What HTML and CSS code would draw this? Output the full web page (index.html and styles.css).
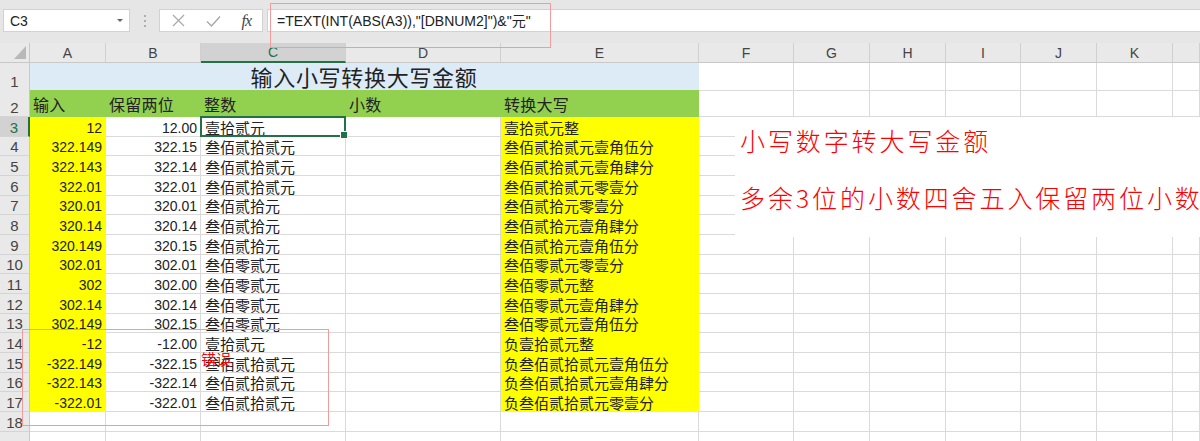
FILE: index.html
```html
<!DOCTYPE html>
<html lang="zh-CN">
<head>
    <meta charset="UTF-8">
    <title>小写转大写金额</title>
    <link rel="stylesheet" href="styles.css">
</head>
<body>
    <div class="toolbar">
        <div class="namebox"><span>C3</span><span class="caret"></span></div>
        <div class="grip">
            <svg width="4" height="14" viewBox="0 0 4 14"><circle cx="2" cy="2" r="1" fill="#9a9a9a"/><circle cx="2" cy="7" r="1" fill="#9a9a9a"/><circle cx="2" cy="12" r="1" fill="#9a9a9a"/></svg>
        </div>
        <div class="fxbtns">
            <svg width="13" height="13" viewBox="0 0 13 13"><path d="M1 1 L12 12 M12 1 L1 12" stroke="#a8a8a8" stroke-width="1.2" fill="none"/></svg>
            <svg width="15" height="12" viewBox="0 0 15 12"><path d="M1 6.5 L5.5 11 L14 1.5" stroke="#a8a8a8" stroke-width="1.4" fill="none"/></svg>
            <span class="fx">fx</span>
        </div>
        <div class="formula">=TEXT(INT(ABS(A3)),"[DBNUM2]")&amp;"<span class="cjk">元</span>"</div>
    </div>

    <div class="sheet">
        <div class="row colhead">
            <div class="corner"><span class="tri"></span></div>
            <div class="ch">A</div><div class="ch">B</div><div class="ch active">C</div><div class="ch">D</div><div class="ch">E</div>
            <div class="ch">F</div><div class="ch">G</div><div class="ch">H</div><div class="ch">I</div><div class="ch">J</div><div class="ch">K</div><div class="ch"></div>
        </div>

        <div class="row tall">
            <div class="rh">1</div>
            <div class="c title">输入小写转换大写金额</div>
            <div class="c"></div><div class="c"></div><div class="c"></div><div class="c"></div><div class="c"></div><div class="c"></div><div class="c"></div>
        </div>

        <div class="row tall">
            <div class="rh">2</div>
            <div class="c head">输入</div><div class="c head">保留两位</div><div class="c head">整数</div><div class="c head">小数</div><div class="c head">转换大写</div>
            <div class="c"></div><div class="c"></div><div class="c"></div><div class="c"></div><div class="c"></div><div class="c"></div><div class="c"></div>
        </div>

        <div class="row">
            <div class="rh active">3</div>
            <div class="c num fill">12</div><div class="c num">12.00</div><div class="c selected">壹拾贰元<span class="sel"></span></div><div class="c"></div><div class="c fill">壹拾贰元整</div>
            <div class="c"></div><div class="c"></div><div class="c"></div><div class="c"></div><div class="c"></div><div class="c"></div><div class="c"></div>
        </div>
        <div class="row">
            <div class="rh">4</div>
            <div class="c num fill">322.149</div><div class="c num">322.15</div><div class="c">叁佰贰拾贰元</div><div class="c"></div><div class="c fill">叁佰贰拾贰元壹角伍分</div>
            <div class="c"></div><div class="c"></div><div class="c"></div><div class="c"></div><div class="c"></div><div class="c"></div><div class="c"></div>
        </div>
        <div class="row">
            <div class="rh">5</div>
            <div class="c num fill">322.143</div><div class="c num">322.14</div><div class="c">叁佰贰拾贰元</div><div class="c"></div><div class="c fill">叁佰贰拾贰元壹角肆分</div>
            <div class="c"></div><div class="c"></div><div class="c"></div><div class="c"></div><div class="c"></div><div class="c"></div><div class="c"></div>
        </div>
        <div class="row">
            <div class="rh">6</div>
            <div class="c num fill">322.01</div><div class="c num">322.01</div><div class="c">叁佰贰拾贰元</div><div class="c"></div><div class="c fill">叁佰贰拾贰元零壹分</div>
            <div class="c"></div><div class="c"></div><div class="c"></div><div class="c"></div><div class="c"></div><div class="c"></div><div class="c"></div>
        </div>
        <div class="row">
            <div class="rh">7</div>
            <div class="c num fill">320.01</div><div class="c num">320.01</div><div class="c">叁佰贰拾元</div><div class="c"></div><div class="c fill">叁佰贰拾元零壹分</div>
            <div class="c"></div><div class="c"></div><div class="c"></div><div class="c"></div><div class="c"></div><div class="c"></div><div class="c"></div>
        </div>
        <div class="row">
            <div class="rh">8</div>
            <div class="c num fill">320.14</div><div class="c num">320.14</div><div class="c">叁佰贰拾元</div><div class="c"></div><div class="c fill">叁佰贰拾元壹角肆分</div>
            <div class="c"></div><div class="c"></div><div class="c"></div><div class="c"></div><div class="c"></div><div class="c"></div><div class="c"></div>
        </div>
        <div class="row">
            <div class="rh">9</div>
            <div class="c num fill">320.149</div><div class="c num">320.15</div><div class="c">叁佰贰拾元</div><div class="c"></div><div class="c fill">叁佰贰拾元壹角伍分</div>
            <div class="c"></div><div class="c"></div><div class="c"></div><div class="c"></div><div class="c"></div><div class="c"></div><div class="c"></div>
        </div>
        <div class="row">
            <div class="rh">10</div>
            <div class="c num fill">302.01</div><div class="c num">302.01</div><div class="c">叁佰零贰元</div><div class="c"></div><div class="c fill">叁佰零贰元零壹分</div>
            <div class="c"></div><div class="c"></div><div class="c"></div><div class="c"></div><div class="c"></div><div class="c"></div><div class="c"></div>
        </div>
        <div class="row">
            <div class="rh">11</div>
            <div class="c num fill">302</div><div class="c num">302.00</div><div class="c">叁佰零贰元</div><div class="c"></div><div class="c fill">叁佰零贰元整</div>
            <div class="c"></div><div class="c"></div><div class="c"></div><div class="c"></div><div class="c"></div><div class="c"></div><div class="c"></div>
        </div>
        <div class="row">
            <div class="rh">12</div>
            <div class="c num fill">302.14</div><div class="c num">302.14</div><div class="c">叁佰零贰元</div><div class="c"></div><div class="c fill">叁佰零贰元壹角肆分</div>
            <div class="c"></div><div class="c"></div><div class="c"></div><div class="c"></div><div class="c"></div><div class="c"></div><div class="c"></div>
        </div>
        <div class="row">
            <div class="rh">13</div>
            <div class="c num fill">302.149</div><div class="c num">302.15</div><div class="c">叁佰零贰元</div><div class="c"></div><div class="c fill">叁佰零贰元壹角伍分</div>
            <div class="c"></div><div class="c"></div><div class="c"></div><div class="c"></div><div class="c"></div><div class="c"></div><div class="c"></div>
        </div>
        <div class="row">
            <div class="rh">14</div>
            <div class="c num fill">-12</div><div class="c num">-12.00</div><div class="c">壹拾贰元</div><div class="c"></div><div class="c fill">负壹拾贰元整</div>
            <div class="c"></div><div class="c"></div><div class="c"></div><div class="c"></div><div class="c"></div><div class="c"></div><div class="c"></div>
        </div>
        <div class="row">
            <div class="rh">15</div>
            <div class="c num fill">-322.149</div><div class="c num">-322.15</div><div class="c">叁佰贰拾贰元</div><div class="c"></div><div class="c fill">负叁佰贰拾贰元壹角伍分</div>
            <div class="c"></div><div class="c"></div><div class="c"></div><div class="c"></div><div class="c"></div><div class="c"></div><div class="c"></div>
        </div>
        <div class="row">
            <div class="rh">16</div>
            <div class="c num fill">-322.143</div><div class="c num">-322.14</div><div class="c">叁佰贰拾贰元</div><div class="c"></div><div class="c fill">负叁佰贰拾贰元壹角肆分</div>
            <div class="c"></div><div class="c"></div><div class="c"></div><div class="c"></div><div class="c"></div><div class="c"></div><div class="c"></div>
        </div>
        <div class="row">
            <div class="rh">17</div>
            <div class="c num fill">-322.01</div><div class="c num">-322.01</div><div class="c">叁佰贰拾贰元</div><div class="c"></div><div class="c fill">负叁佰贰拾贰元零壹分</div>
            <div class="c"></div><div class="c"></div><div class="c"></div><div class="c"></div><div class="c"></div><div class="c"></div><div class="c"></div>
        </div>
        <div class="row">
            <div class="rh">18</div>
            <div class="c"></div><div class="c"></div><div class="c"></div><div class="c"></div><div class="c"></div>
            <div class="c"></div><div class="c"></div><div class="c"></div><div class="c"></div><div class="c"></div><div class="c"></div><div class="c"></div>
        </div>
        <div class="row">
            <div class="rh"></div>
            <div class="c"></div><div class="c"></div><div class="c"></div><div class="c"></div><div class="c"></div>
            <div class="c"></div><div class="c"></div><div class="c"></div><div class="c"></div><div class="c"></div><div class="c"></div><div class="c"></div>
        </div>
    </div>

    <!-- annotations drawn on top of the sheet -->
    <div class="mark mark-formula"></div>
    <div class="mark mark-neg"></div>
    <div class="note-error">错误</div>
    <div class="textbox">
        <div class="tb-line">小写数字转大写金额</div>
        <div class="tb-line">多余3位的小数四舍五入保留两位小数</div>
    </div>
</body>
</html>
```

FILE: styles.css
```css
* {
    box-sizing: border-box;
}
body {
    margin: 0;
    width: 1200px;
    height: 441px;
    overflow: hidden;
    position: relative;
    background-color: #ffffff;
    font-family: "Noto Sans CJK SC", sans-serif;
    color: #222;
}

/* formula bar */
.toolbar {
    height: 43px;
    background-color: #e6e6e6;
    display: flex;
    align-items: flex-start;
    padding: 9px 0 0 3px;
}
.namebox {
    width: 127px;
    height: 23px;
    background-color: #fff;
    border: 1px solid #d2d2d2;
    display: flex;
    align-items: center;
    justify-content: space-between;
    padding: 0 6px 0 6px;
    font: 14px "Liberation Sans", sans-serif;
    color: #222;
}
.caret {
    width: 0;
    height: 0;
    border-left: 3px solid transparent;
    border-right: 3px solid transparent;
    border-top: 3px solid #666;
}
.grip {
    width: 29px;
    height: 23px;
    display: flex;
    align-items: center;
    justify-content: center;
}
.fxbtns {
    width: 104px;
    height: 23px;
    background-color: #fff;
    border: 1px solid #d2d2d2;
    display: flex;
    align-items: center;
    justify-content: space-between;
    padding: 0 11px 0 12px;
}
.fx {
    font: italic 16px "Liberation Serif", serif;
    color: #444;
    letter-spacing: -1px;
}
.formula {
    flex: 1;
    height: 23px;
    margin-left: 4px;
    background-color: #fff;
    border: 1px solid #d2d2d2;
    border-right: none;
    padding-left: 9px;
    font: 14px/21px "Liberation Sans", sans-serif;
    color: #222;
    white-space: nowrap;
}
.cjk {
    font-family: "Noto Sans CJK SC", sans-serif;
}

/* sheet grid */
.row {
    display: grid;
    grid-template-columns: 30px 76px 95px 145px 155px 198px 95px 76px 76px 75px 76px 76px 1fr;
    height: 19.67px;
}
.row.colhead {
    height: 20px;
}
.row.tall {
    height: 27px;
}
.corner, .ch, .rh {
    background-color: #e9e9e9;
    color: #444;
    font-family: "Liberation Sans", sans-serif;
}
.corner {
    position: relative;
    border-right: 1px solid #c8c8c8;
    border-bottom: 1px solid #c8c8c8;
}
.tri {
    position: absolute;
    right: 3px;
    bottom: 3px;
    width: 0;
    height: 0;
    border-left: 12px solid transparent;
    border-bottom: 13px solid #b8b8b8;
}
.ch {
    border-right: 1px solid #d0d0d0;
    border-bottom: 1px solid #c8c8c8;
    font-size: 14px;
    display: flex;
    align-items: center;
    justify-content: center;
}
.ch.active {
    background-color: #d2d2d2;
    color: #217346;
    border-bottom: 2px solid #217346;
}
.rh {
    border-right: 1px solid #c8c8c8;
    border-bottom: 1px solid #d4d4d4;
    font-size: 15px;
    line-height: 17px;
    display: flex;
    align-items: flex-end;
    justify-content: center;
}
.rh.active {
    background-color: #d2d2d2;
    color: #217346;
    border-right: 2px solid #217346;
}
.c {
    border-right: 1px solid #dadada;
    border-bottom: 1px solid #dadada;
    font-size: 15px;
    line-height: 16px;
    padding: 0 3px 0 4px;
    display: flex;
    align-items: flex-end;
    white-space: nowrap;
    color: #222;
}
.num {
    justify-content: flex-end;
    font-family: "Liberation Sans", sans-serif;
    font-size: 14px;
    padding-right: 3px;
}
.fill {
    background-color: #ffff00;
    border-color: #ffff00;
    padding-left: 3px;
}
.title {
    grid-column: span 5;
    background-color: #ddebf7;
    border-color: #ddebf7;
    justify-content: center;
    align-items: center;
    font-size: 22px;
    line-height: 26px;
    letter-spacing: 0.7px;
    padding: 0 0 1px 0;
}
.head {
    background-color: #92d050;
    border-color: #92d050;
    font-size: 16px;
    line-height: 22px;
    letter-spacing: 0.25px;
    padding: 0 3px 1px 3px;
}
.selected {
    position: relative;
}
.sel {
    position: absolute;
    top: -1px;
    left: -1px;
    right: -1px;
    bottom: -1px;
    border: 2px solid #217346;
}
.sel::after {
    content: "";
    position: absolute;
    right: -4px;
    bottom: -4px;
    width: 6px;
    height: 6px;
    background-color: #217346;
    border: 1px solid #fff;
}

/* annotations */
.mark {
    position: absolute;
    border: 1.5px solid #f09c9c;
}
.mark-formula {
    left: 270px;
    top: 3px;
    width: 281px;
    height: 45px;
}
.mark-neg {
    left: 22px;
    top: 329px;
    width: 307px;
    height: 97px;
}
.note-error {
    position: absolute;
    left: 201px;
    top: 350px;
    font-size: 15px;
    line-height: 18px;
    color: #ff0000;
}
.textbox {
    position: absolute;
    left: 735px;
    top: 117px;
    width: 470px;
    height: 120px;
    background-color: #fff;
    padding-left: 5px;
}
.tb-line {
    height: 46px;
    line-height: 46px;
    font-size: 25px;
    font-weight: 300;
    letter-spacing: 2.9px;
    color: #ff0000;
    white-space: nowrap;
}
.tb-line + .tb-line {
    margin-top: 11px;
}
```
